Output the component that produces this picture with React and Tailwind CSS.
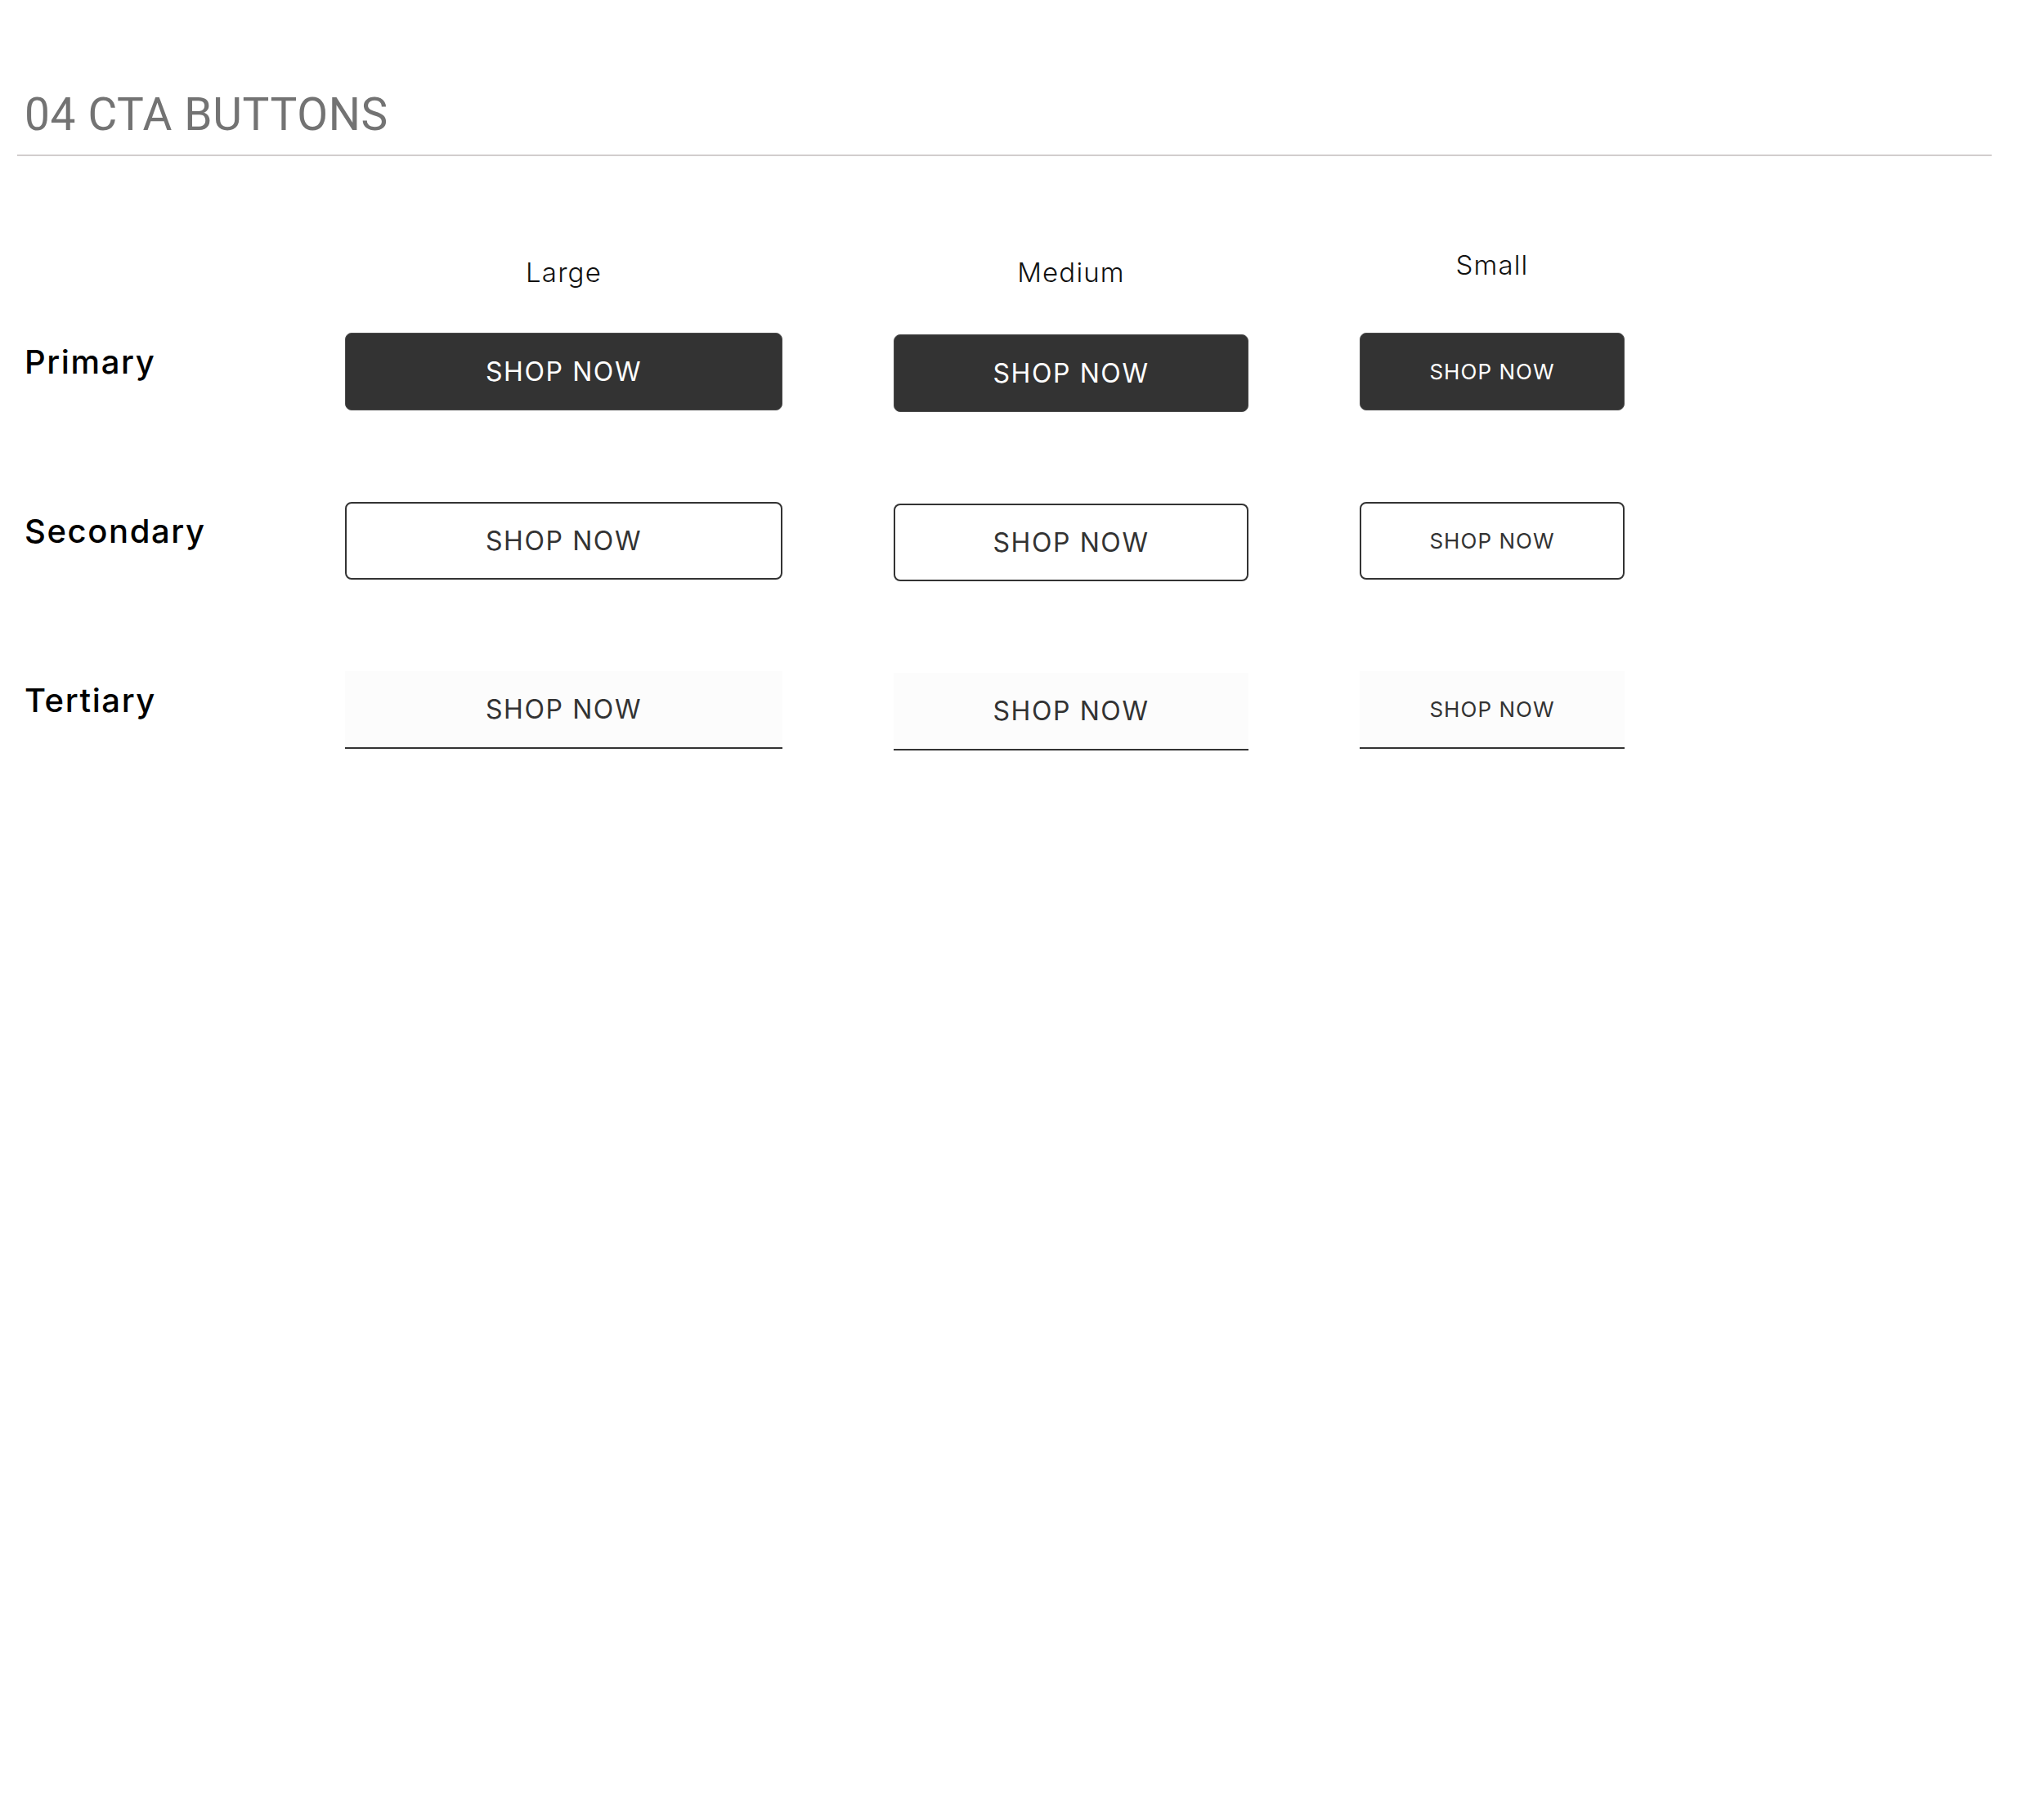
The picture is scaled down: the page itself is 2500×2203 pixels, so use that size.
import React from "react";

const sizes = [
  { name: "Large", text: "text-[32px] tracking-[0.05em]", head: "" },
  { name: "Medium", text: "text-[32px] tracking-[0.05em] mt-[2px]", head: "" },
  { name: "Small", text: "text-[26px] tracking-[0.04em]", head: "-mt-[9px]" },
];

function PrimaryBtn({ text }) {
  return (
    <button className={`h-[95px] w-full rounded-lg border border-[#4a4a4a] bg-[#333333] text-white ${text}`}>
      SHOP NOW
    </button>
  );
}

function SecondaryBtn({ text }) {
  return (
    <button className={`h-[95px] w-full rounded-lg border-2 border-[#333333] bg-white text-[#333333] ${text}`}>
      SHOP NOW
    </button>
  );
}

function TertiaryBtn({ text }) {
  return (
    <button className={`h-[95px] w-full border-b-2 border-[#333333] bg-[#fcfcfc] text-[#333333] ${text}`}>
      SHOP NOW
    </button>
  );
}

const rows = [
  { label: "Primary", Btn: PrimaryBtn, gap: "" },
  { label: "Secondary", Btn: SecondaryBtn, gap: "mt-[110px]" },
  { label: "Tertiary", Btn: TertiaryBtn, gap: "mt-[110px]" },
];

export default function App() {
  return (
    <div className="min-h-screen bg-white px-[21px] font-[Inter,sans-serif]">
      <div className="pt-[107px]">
        <h1 className="pl-[9px] font-[Roboto,sans-serif] text-[55px] leading-[66px] font-normal tracking-[0.012em] text-[#737373]">
          04 CTA BUTTONS
        </h1>
        <div className="mt-[16px] h-[2px] w-[2415px] bg-[#d2cdcd]" />
      </div>

      <div className="pl-[9px]">
        {/* column headers */}
        <div className="mt-[122px] grid grid-cols-[256px_535px_434px_324px] gap-x-[136px]">
          <div />
          {sizes.map((s) => (
            <div
              key={s.name}
              className={`text-center text-[33px] leading-[40px] font-light text-[#111111] tracking-[0.035em] ${s.head}`}
            >
              {s.name}
            </div>
          ))}
        </div>

        {/* button rows */}
        <div className="mt-[54px] flex flex-col">
          {rows.map(({ label, Btn, gap }) => (
            <div
              key={label}
              className={`grid grid-cols-[256px_535px_434px_324px] gap-x-[136px] items-start ${gap}`}
            >
              <div className="mt-[12px] text-[40px] leading-[48px] font-medium text-black tracking-[0.04em]">
                {label}
              </div>
              {sizes.map((s) => (
                <Btn key={s.name} text={s.text} />
              ))}
            </div>
          ))}
        </div>
      </div>
    </div>
  );
}
